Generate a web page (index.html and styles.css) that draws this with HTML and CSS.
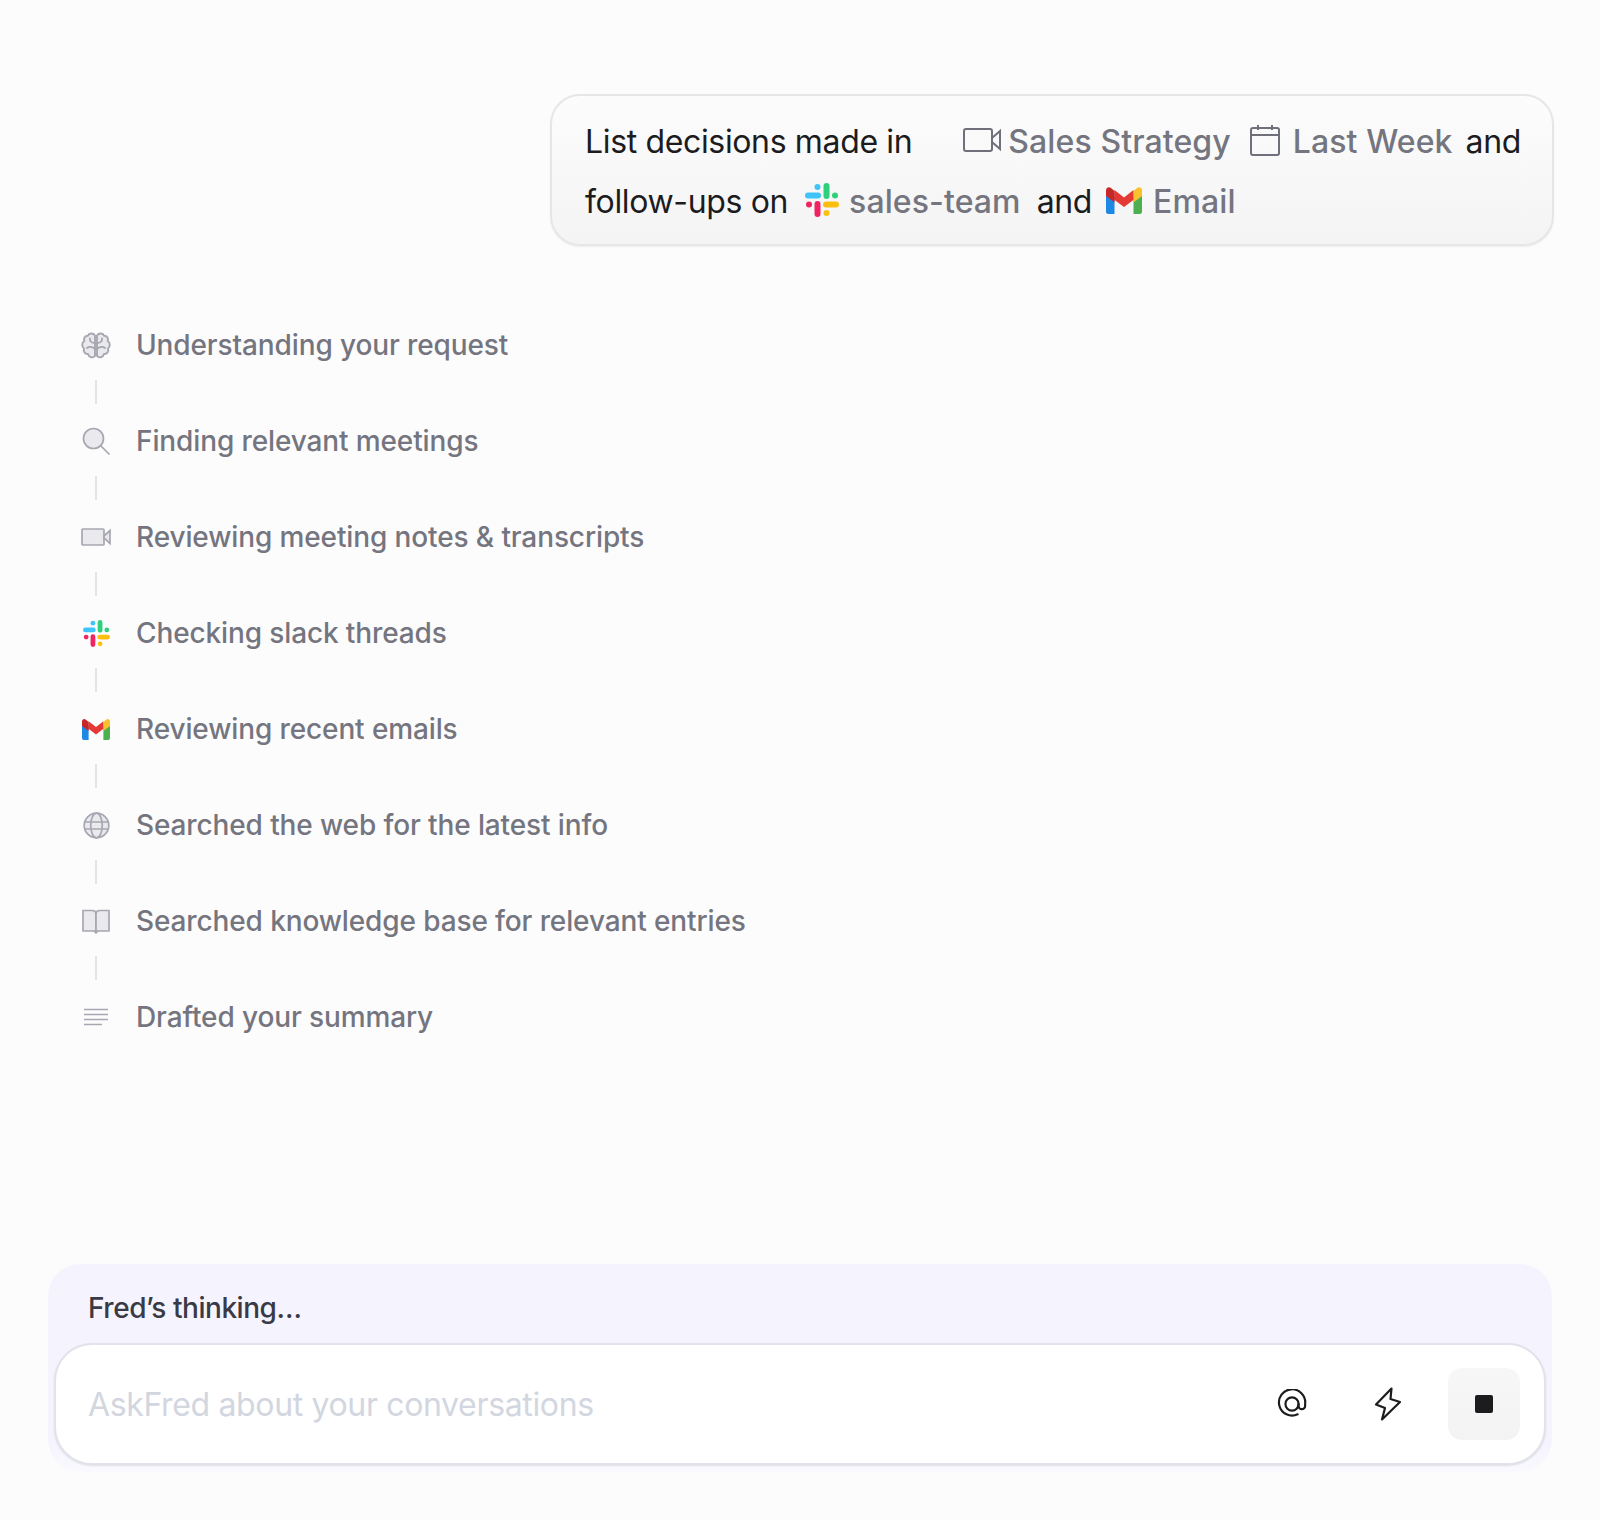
FILE: index.html
```html
<!DOCTYPE html>
<html lang="en">
<head>
<meta charset="utf-8">
<title>AskFred</title>
<link rel="stylesheet" href="styles.css">
</head>
<body>
<svg class="defs" width="0" height="0" aria-hidden="true">
  <symbol id="slack" viewBox="0 0 34 34">
    <g fill="none" stroke-width="6" stroke-linecap="round">
      <path d="M3 12.500H13" stroke="#3fc3fb"/>
      <path d="M21.500 3V13" stroke="#2fd07b"/>
      <path d="M12.500 21V31" stroke="#ee2560"/>
      <path d="M21 21.500H31" stroke="#fdbf0f"/>
    </g>
    <circle cx="12.500" cy="4" r="3" fill="#3fc3fb"/>
    <circle cx="30" cy="12.500" r="3" fill="#2fd07b"/>
    <circle cx="4" cy="21.500" r="3" fill="#ee2560"/>
    <circle cx="21.500" cy="30" r="3" fill="#fdbf0f"/>
  </symbol>
  <symbol id="gmail" viewBox="0 0 36 28">
    <path d="M0 6.500V25.500A2.500 2.500 0 0 0 2.500 28H8.500V11Z" fill="#1e88e5"/>
    <path d="M36 6.500V25.500A2.500 2.500 0 0 1 33.500 28H27.500V11Z" fill="#4caf50"/>
    <path d="M27.500 4 18 11.500 8.500 4 8 13.500 18 21 28 13.500Z" fill="#e53935"/>
    <path d="M0 4.500V10L8.500 16.500V5L5 2C3 .3 0 1.500 0 4.500Z" fill="#c62828"/>
    <path d="M36 4.500V10L27.500 16.500V5L31 2C33 .3 36 1.500 36 4.500Z" fill="#fbc02d"/>
  </symbol>
</svg>

<main class="page">
  <section class="bubble">
    <p class="bubble-line">
      <span class="word">List decisions made in</span>
      <span class="chip chip-meeting">
        <svg class="chip-icon icon-video" viewBox="0 0 38 24" fill="none" stroke="#6f707a" stroke-width="2"><rect x="1" y="1" width="28" height="22" rx="2"/><path d="M29 10 37 3V21L29 14Z"/></svg>
        <span>Sales Strategy</span>
      </span>
      <span class="chip chip-date">
        <svg class="chip-icon icon-cal" viewBox="0 0 30 32" fill="none" stroke="#6f707a" stroke-width="2"><rect x="1" y="4" width="28" height="27" rx="2"/><path d="M1 11H29M8 1V6M22 1V6"/></svg>
        <span>Last Week</span>
      </span>
      <span class="word word-end">and</span>
    </p>
    <p class="bubble-line">
      <span class="word">follow-ups on</span>
      <span class="chip chip-slack">
        <svg class="chip-icon icon-slack"><use href="#slack"/></svg>
        <span>sales-team</span>
      </span>
      <span class="word word-and">and</span>
      <span class="chip chip-mail">
        <svg class="chip-icon icon-gmail"><use href="#gmail"/></svg>
        <span>Email</span>
      </span>
    </p>
  </section>

  <ol class="steps">
    <li class="step">
      <span class="step-icon">
        <svg width="30" height="27" viewBox="0 0 30 27" fill="#eaeaee" stroke="#a6a7b0" stroke-width="1.900" stroke-linejoin="round" stroke-linecap="round"><path d="M14 3.500C12 .5 8 1 6.800 3.800 3.800 3.800 2.300 6.500 3.300 9 .6 10.500.6 15 3 16.500 2 19.500 4 22.300 7 22 8 25.500 12 26.500 14 24Z"/><path d="M16 3.500C18 .5 22 1 23.200 3.800 26.200 3.800 27.700 6.500 26.700 9 29.400 10.500 29.400 15 27 16.500 28 19.500 26 22.300 23 22 22 25.500 18 26.500 16 24Z"/><path d="M14 11C11 11 8.500 9.500 9 6.500M14 17C11.500 14.500 8 14.500 6 16M16 11C19 11 21.500 9.500 21 6.500M16 17C18.500 14.500 22 14.500 24 16" fill="none"/></svg>
      </span>
      <span class="step-text">Understanding your request</span>
    </li>
    <li class="step">
      <span class="step-icon">
        <svg width="28" height="28" viewBox="0 0 28 28" fill="#eaeaee" stroke="#a6a7b0" stroke-width="1.700" stroke-linecap="round"><circle cx="11.500" cy="11.500" r="10"/><path d="M19 19 27 27" fill="none"/></svg>
      </span>
      <span class="step-text">Finding relevant meetings</span>
    </li>
    <li class="step">
      <span class="step-icon">
        <svg width="30" height="18" viewBox="0 0 30 18" fill="#eaeaee" stroke="#a6a7b0" stroke-width="1.700"><rect x="1" y="1" width="22" height="16" rx="1"/><path d="M23 8 29 2.500V15.500L23 10Z"/></svg>
      </span>
      <span class="step-text">Reviewing meeting notes &amp; transcripts</span>
    </li>
    <li class="step">
      <span class="step-icon"><svg class="step-slack"><use href="#slack"/></svg></span>
      <span class="step-text">Checking slack threads</span>
    </li>
    <li class="step">
      <span class="step-icon"><svg class="step-gmail"><use href="#gmail"/></svg></span>
      <span class="step-text">Reviewing recent emails</span>
    </li>
    <li class="step">
      <span class="step-icon">
        <svg width="27" height="27" viewBox="0 0 27 27" fill="#eaeaee" stroke="#a6a7b0" stroke-width="1.700"><circle cx="13.500" cy="13.500" r="12.300"/><ellipse cx="13.500" cy="13.500" rx="5.800" ry="12.300" fill="none"/><path d="M1.500 10H25.500M1.500 17H25.500" fill="none"/></svg>
      </span>
      <span class="step-text">Searched the web for the latest info</span>
    </li>
    <li class="step">
      <span class="step-icon">
        <svg width="28" height="25" viewBox="0 0 28 25" fill="#eaeaee" stroke="#a6a7b0" stroke-width="1.700" stroke-linejoin="round"><path d="M1 1.500H10C12.500 1.500 14 3 14 5V22H1Z"/><path d="M27 1.500H18C15.500 1.500 14 3 14 5V22H27Z"/><path d="M12 22 14 24 16 22" fill="none"/></svg>
      </span>
      <span class="step-text">Searched knowledge base for relevant entries</span>
    </li>
    <li class="step">
      <span class="step-icon">
        <svg width="26" height="18" viewBox="0 0 26 18" fill="none" stroke="#a6a7b0" stroke-width="1.500"><path d="M1 1.500H25M1 6.500H25M1 11.500H25M1 16.500H19"/></svg>
      </span>
      <span class="step-text">Drafted your summary</span>
    </li>
  </ol>

  <section class="composer">
    <div class="status">Fred’s thinking…</div>
    <div class="input">
      <span class="placeholder">AskFred about your conversations</span>
      <div class="actions">
        <button class="action" type="button" aria-label="Mention">
          <svg width="30" height="30" viewBox="0 0 32 32" fill="none" stroke="#1c1c1e" stroke-width="2.300" stroke-linecap="round"><path d="M22 27A14 14 0 1 1 30 16V18A3.500 3.500 0 0 1 23 18V16"/><circle cx="16" cy="16" r="7"/></svg>
        </button>
        <button class="action" type="button" aria-label="Actions">
          <svg width="28" height="34" viewBox="0 0 28 34" fill="none" stroke="#1c1c1e" stroke-width="2.200" stroke-linejoin="round"><path d="M17.500 1.500 2 17.500 11 21 8 32.500 26 15 16.500 12Z"/></svg>
        </button>
        <button class="stop" type="button" aria-label="Stop"><span class="stop-square"></span></button>
      </div>
    </div>
  </section>
</main>
</body>
</html>
```

FILE: styles.css
```css
* {
  box-sizing: border-box;
}

html,
body {
  margin: 0;
  padding: 0;
}

body {
  background: #fcfcfd;
  font-family: Inter, "Noto Sans", sans-serif;
}

.defs {
  position: absolute;
}

.page {
  height: 1520px;
  display: flex;
  flex-direction: column;
  padding: 94px 46px 48px 48px;
}

.bubble {
  align-self: flex-end;
  width: 1004px;
  height: 152px;
  padding: 15px 33px;
  border-radius: 30px;
  border: 2px solid #e6e6e8;
  background: linear-gradient(180deg, #fcfcfc 0%, #f4f4f5 100%);
  box-shadow: 0 1px 2px rgba(0, 0, 0, 0.06);
  color: #1c1c1e;
  font-size: 32px;
}

.bubble-line {
  margin: 0;
  height: 60px;
  display: flex;
  align-items: center;
  white-space: nowrap;
}

.word {
  letter-spacing: -0.35px;
}

.chip {
  display: inline-flex;
  align-items: center;
  color: #74757f;
  font-weight: 500;
  letter-spacing: 0.1px;
}

.chip-icon {
  flex: none;
  margin-bottom: 2px;
}

.chip-meeting {
  margin-left: 51px;
}

.icon-video {
  width: 38px;
  height: 24px;
  margin-right: 7px;
}

.chip-date {
  margin-left: 19px;
}

.icon-cal {
  width: 30px;
  height: 32px;
  margin-right: 13px;
}

.word-end {
  margin-left: 13px;
}

.word-and {
  margin-left: 16px;
}

.chip-slack {
  margin-left: 17px;
}

.icon-slack {
  width: 34px;
  height: 34px;
  margin-right: 10px;
}

.chip-mail {
  margin-left: 14px;
}

.icon-gmail {
  width: 36px;
  height: 28px;
  margin-right: 11px;
}

.steps {
  list-style: none;
  margin: 83px 0 0;
  padding: 0 0 0 32px;
  display: flex;
  flex-direction: column;
  gap: 64px;
}

.step {
  position: relative;
  height: 32px;
  display: flex;
  align-items: center;
  color: #74757f;
  font-size: 28px;
  font-weight: 500;
  letter-spacing: -0.12px;
}

.step + .step::before {
  content: "";
  position: absolute;
  left: 15px;
  top: -45px;
  width: 2px;
  height: 24px;
  background: #e4e4e7;
}

.step-icon {
  flex: none;
  width: 32px;
  height: 32px;
  margin-right: 24px;
  display: flex;
  align-items: center;
  justify-content: center;
}

.step-slack {
  width: 27px;
  height: 27px;
}

.step-gmail {
  width: 28px;
  height: 22px;
}

.composer {
  margin-top: auto;
  height: 208px;
  width: 1504px;
  padding: 0 6px 7px;
  border-radius: 32px;
  background: linear-gradient(180deg, #f5f4fe 0%, #f5f4fe 85%, #f9f9fe 100%);
}

.status {
  height: 79px;
  padding: 28px 0 0 34px;
  color: #3a3a46;
  font-size: 28px;
  line-height: 32px;
  font-weight: 500;
  letter-spacing: -0.45px;
}

.input {
  height: 122px;
  display: flex;
  align-items: center;
  justify-content: space-between;
  padding: 0 24px 0 32px;
  border: 2px solid #e2e2ea;
  border-radius: 38px;
  background: #fff;
  box-shadow: 0 1px 2px rgba(0, 0, 0, 0.1);
}

.placeholder {
  color: #d2d6df;
  font-size: 32px;
  letter-spacing: -0.35px;
}

.actions {
  display: flex;
  align-items: center;
}

.action {
  width: 96px;
  height: 72px;
  padding: 0;
  border: 0;
  background: none;
  display: flex;
  align-items: center;
  justify-content: center;
}

.action + .action {
  margin-right: 12px;
}

.stop {
  width: 72px;
  height: 72px;
  padding: 0;
  border: 0;
  border-radius: 14px;
  background: linear-gradient(180deg, #f7f7f7 0%, #f3f3f4 100%);
  display: flex;
  align-items: center;
  justify-content: center;
}

.stop-square {
  width: 18px;
  height: 18px;
  border-radius: 2px;
  background: #1c1c1e;
}
```
